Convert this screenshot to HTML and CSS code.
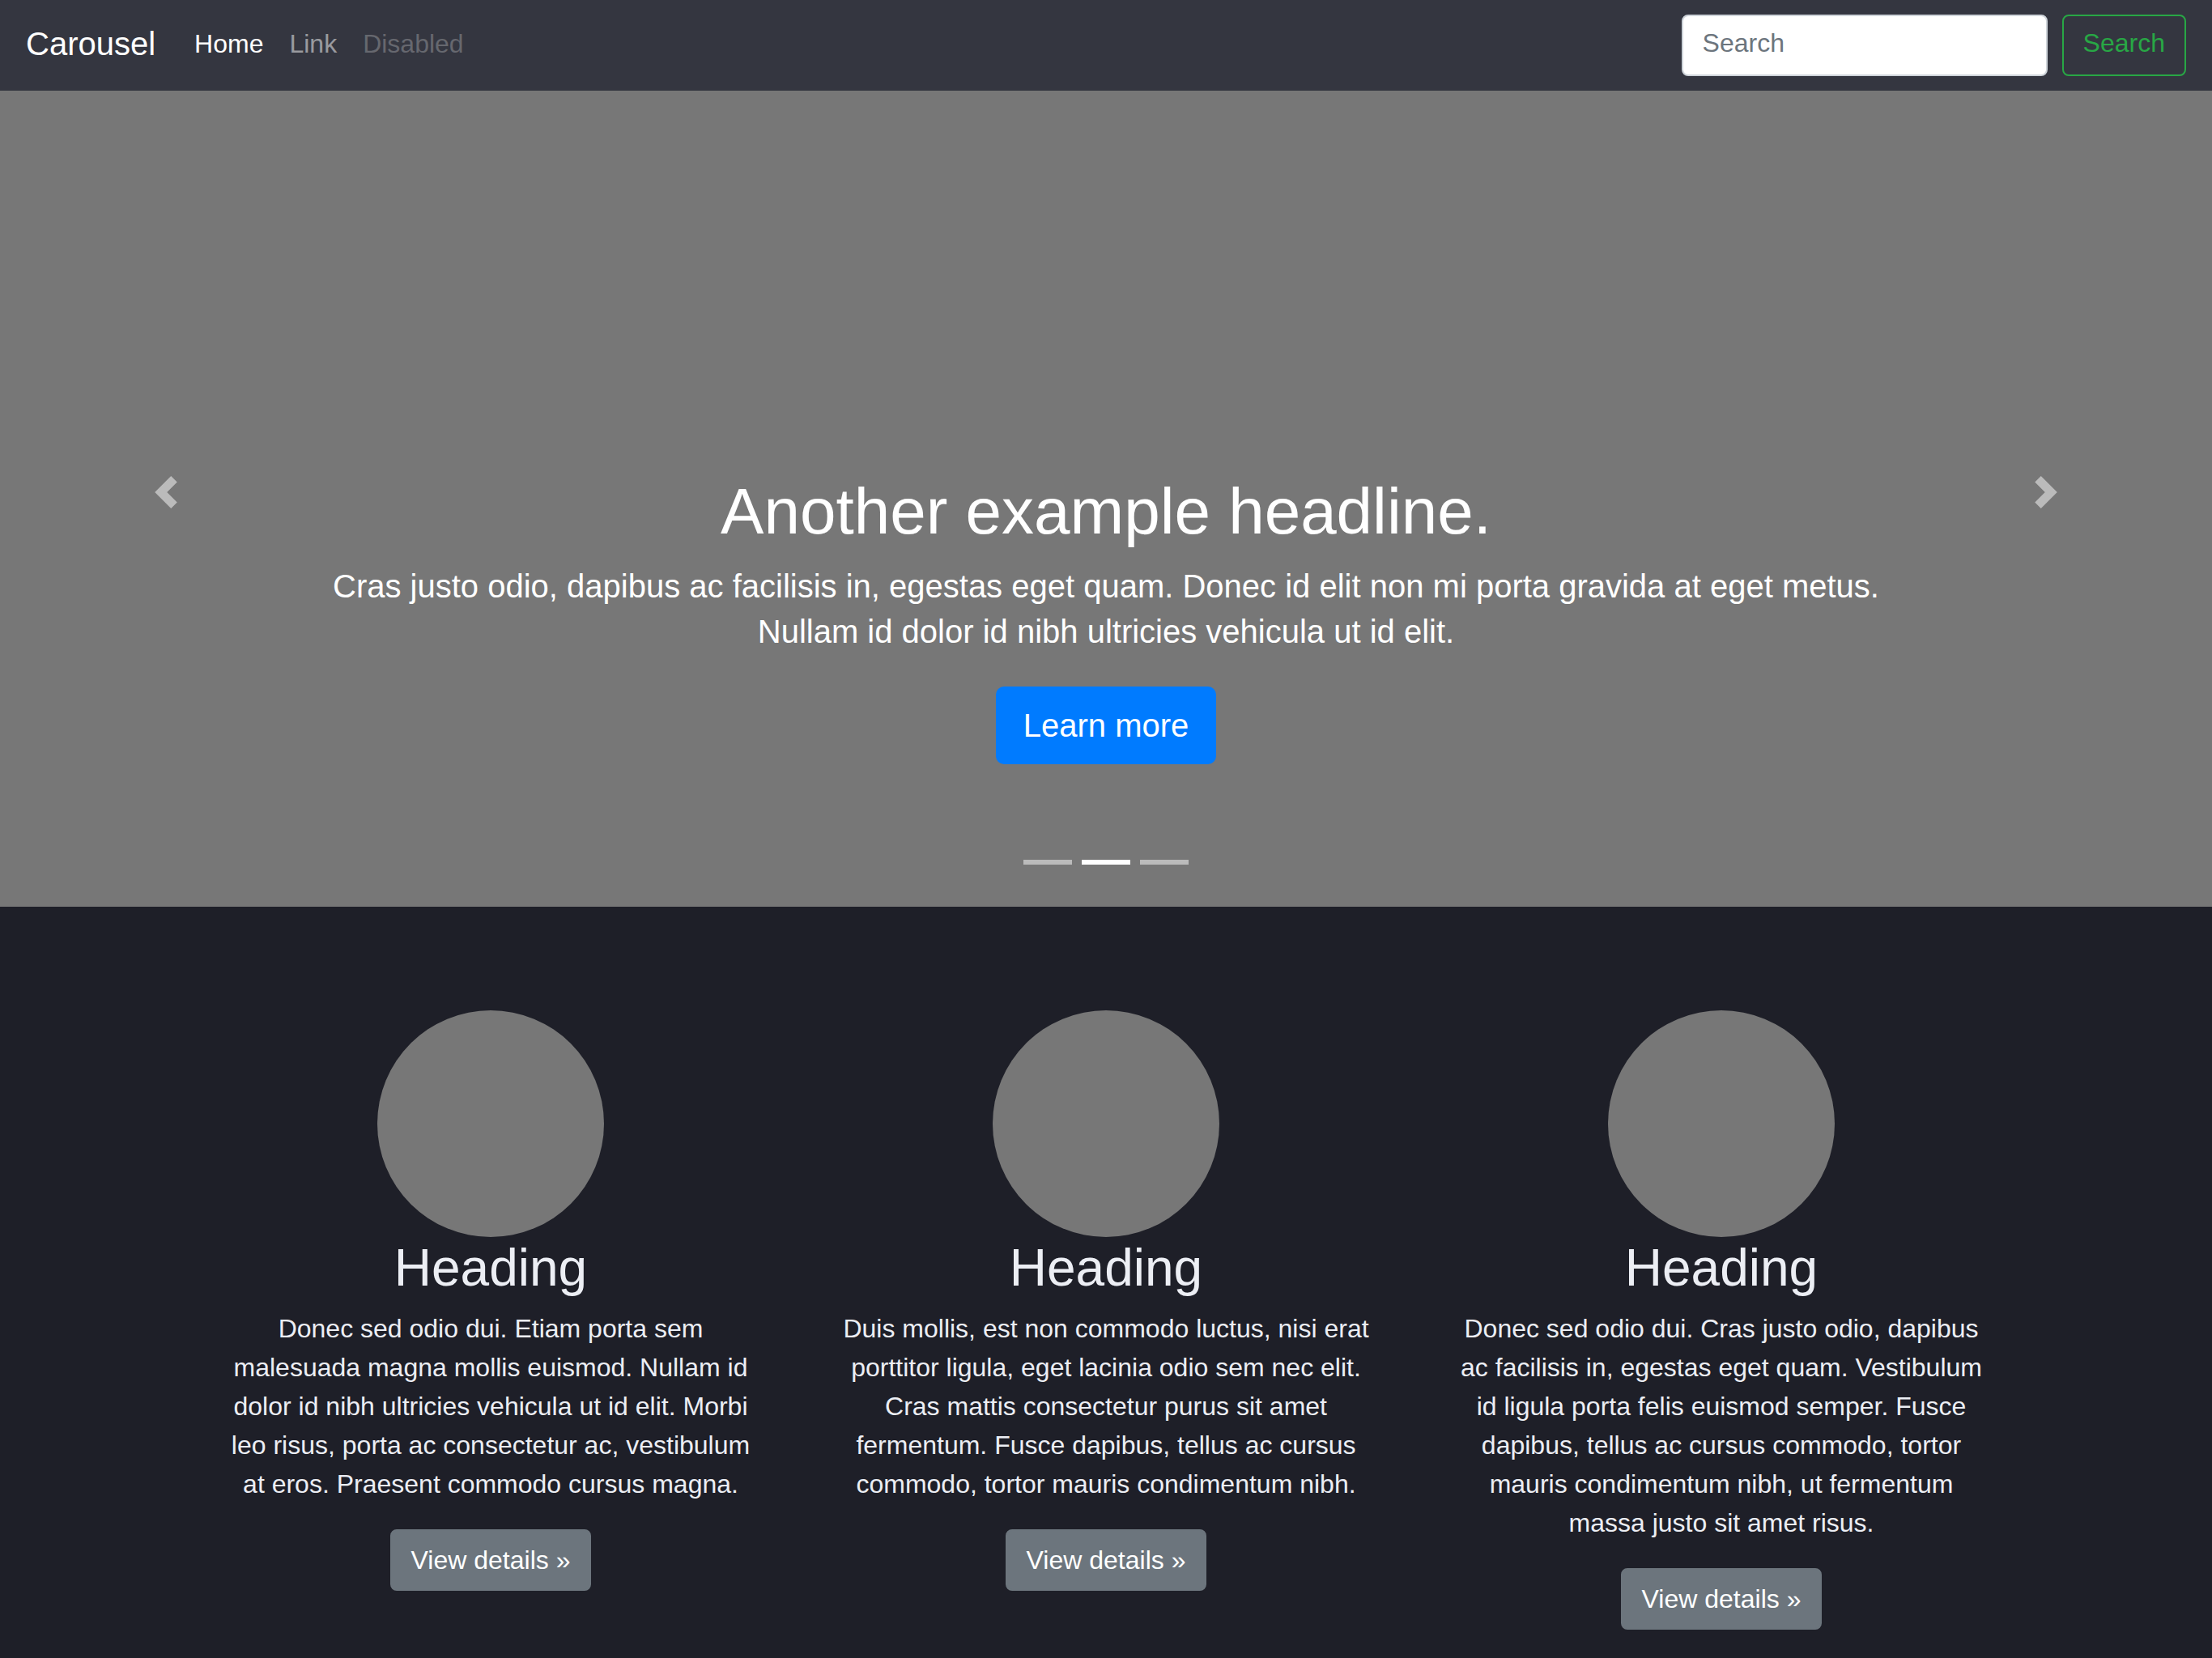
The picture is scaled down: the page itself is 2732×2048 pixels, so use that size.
FILE: index.html
```html
<!DOCTYPE html>
<html lang="en">
<head>
<meta charset="utf-8">
<title>Carousel Template</title>
<link rel="stylesheet" href="styles.css">
</head>
<body>
<header class="navbar">
  <a class="brand" href="#">Carousel</a>
  <nav class="nav">
    <a class="nav-link active" href="#">Home</a>
    <a class="nav-link" href="#">Link</a>
    <a class="nav-link disabled" href="#">Disabled</a>
  </nav>
  <form class="search">
    <input class="search-input" type="text" placeholder="Search" aria-label="Search">
    <button class="btn-outline" type="button">Search</button>
  </form>
</header>
<main>
  <section class="carousel">
    <ol class="indicators">
      <li></li>
      <li class="active"></li>
      <li></li>
    </ol>
    <div class="caption">
      <h1 class="caption-title">Another example headline.</h1>
      <p class="caption-text">Cras justo odio, dapibus ac facilisis in, egestas eget quam. Donec id elit non mi porta gravida at eget metus. Nullam id dolor id nibh ultricies vehicula ut id elit.</p>
      <p class="caption-text"><a class="btn-primary" href="#">Learn more</a></p>
    </div>
    <a class="control prev" href="#" aria-label="Previous">
      <svg class="control-icon" viewBox="0 0 8 8" width="40" height="40"><path fill="#fff" d="M5.25 0l-4 4 4 4 1.5-1.5L4.25 4l2.5-2.5L5.25 0z"/></svg>
    </a>
    <a class="control next" href="#" aria-label="Next">
      <svg class="control-icon" viewBox="0 0 8 8" width="40" height="40"><path fill="#fff" d="M2.75 0l-1.5 1.5L3.75 4l-2.5 2.5L2.75 8l4-4-4-4z"/></svg>
    </a>
  </section>

  <section class="marketing">
    <div class="col">
      <svg class="placeholder" width="280" height="280" viewBox="0 0 280 280"><circle cx="140" cy="140" r="140" fill="#777"/></svg>
      <h2 class="col-title">Heading</h2>
      <p class="col-text">Donec sed odio dui. Etiam porta sem malesuada magna mollis euismod. Nullam id dolor id nibh ultricies vehicula ut id elit. Morbi leo risus, porta ac consectetur ac, vestibulum at eros. Praesent commodo cursus magna.</p>
      <p class="col-action"><a class="btn-secondary" href="#">View details &raquo;</a></p>
    </div>
    <div class="col">
      <svg class="placeholder" width="280" height="280" viewBox="0 0 280 280"><circle cx="140" cy="140" r="140" fill="#777"/></svg>
      <h2 class="col-title">Heading</h2>
      <p class="col-text">Duis mollis, est non commodo luctus, nisi erat porttitor ligula, eget lacinia odio sem nec elit. Cras mattis consectetur purus sit amet fermentum. Fusce dapibus, tellus ac cursus commodo, tortor mauris condimentum nibh.</p>
      <p class="col-action"><a class="btn-secondary" href="#">View details &raquo;</a></p>
    </div>
    <div class="col">
      <svg class="placeholder" width="280" height="280" viewBox="0 0 280 280"><circle cx="140" cy="140" r="140" fill="#777"/></svg>
      <h2 class="col-title">Heading</h2>
      <p class="col-text">Donec sed odio dui. Cras justo odio, dapibus ac facilisis in, egestas eget quam. Vestibulum id ligula porta felis euismod semper. Fusce dapibus, tellus ac cursus commodo, tortor mauris condimentum nibh, ut fermentum massa justo sit amet risus.</p>
      <p class="col-action"><a class="btn-secondary" href="#">View details &raquo;</a></p>
    </div>
  </section>
</main>
</body>
</html>
```

FILE: styles.css
```css
html {
  background: #1e1f28;
}

body {
  margin: 0;
  background: #1e1f28;
  color: #eceef4;
  font-family: "Liberation Sans", Arial, sans-serif;
  font-size: 32px;
  line-height: 1.5;
}

a {
  text-decoration: none;
}

/* ---------- navbar ---------- */
.navbar {
  display: flex;
  align-items: center;
  height: 112px;
  box-sizing: border-box;
  padding: 14px 32px 18px;
  background: #343640;
}

.brand {
  font-size: 40px;
  line-height: 60px;
  padding: 10px 0;
  margin-right: 32px;
  color: #fff;
}

.nav {
  display: flex;
  flex: 1;
}

.nav-link {
  display: block;
  padding: 16px;
  line-height: 48px;
  color: rgba(255, 255, 255, 0.5);
}

.nav-link.active {
  color: #fff;
}

.nav-link.disabled {
  color: rgba(255, 255, 255, 0.25);
}

.search {
  display: flex;
  align-items: center;
  margin: 2px 0 -2px;
}

.search-input {
  box-sizing: border-box;
  width: 452px;
  height: 76px;
  margin-right: 18px;
  padding: 9px 24px 15px;
  border: 2px solid #ced4da;
  border-radius: 8px;
  background: #fff;
  font-family: inherit;
  font-size: 32px;
  line-height: 48px;
  color: #495057;
}

.search-input::placeholder {
  color: #6c757d;
}

.btn-outline {
  box-sizing: border-box;
  height: 76px;
  padding: 9px 24px 15px;
  border: 2px solid #28a745;
  border-radius: 8px;
  background: transparent;
  color: #28a745;
  font-family: inherit;
  font-size: 32px;
  line-height: 48px;
}

/* ---------- carousel ---------- */
.carousel {
  position: relative;
  height: 1008px;
  background: #777;
  display: flex;
  flex-direction: column;
  justify-content: flex-end;
  padding: 0 15% 96px;
  box-sizing: border-box;
  margin-bottom: 128px;
}

.caption {
  position: relative;
  z-index: 10;
  padding: 40px 0;
  text-align: center;
  color: #fff;
}

.caption-title {
  margin: 0 0 16px;
  font-size: 80px;
  font-weight: 500;
  line-height: 1.2;
}

.caption-text {
  margin: 0 0 40px;
  font-size: 40px;
  line-height: 1.4;
}

.btn-primary {
  display: inline-block;
  vertical-align: top;
  padding: 16px 32px;
  border: 2px solid #007bff;
  border-radius: 10px;
  background: #007bff;
  color: #fff;
  font-size: 40px;
  line-height: 60px;
}

.indicators {
  position: absolute;
  left: 0;
  right: 0;
  bottom: 0;
  z-index: 15;
  display: flex;
  justify-content: center;
  margin: 0 0 32px;
  padding: 0;
  list-style: none;
}

.indicators li {
  box-sizing: content-box;
  width: 60px;
  height: 6px;
  margin: 0 6px;
  border-top: 20px solid transparent;
  border-bottom: 20px solid transparent;
  background: #fff;
  background-clip: padding-box;
  opacity: 0.5;
}

.indicators li.active {
  opacity: 1;
}

.control {
  position: absolute;
  top: -16px;
  bottom: 0;
  z-index: 1;
  width: 15%;
  display: flex;
  align-items: center;
  justify-content: center;
  opacity: 0.5;
}

.control.prev {
  left: 0;
}

.control.next {
  right: 0;
}

.control-icon {
  display: block;
  width: 40px;
  height: 40px;
}

/* ---------- marketing ---------- */
.marketing {
  display: grid;
  grid-template-columns: repeat(3, 760px);
  width: 2280px;
  margin: 0 auto;
  align-items: start;
}

.col {
  padding: 0 30px;
  margin-bottom: 48px;
  text-align: center;
}

.placeholder {
  display: block;
  margin: 0 auto;
}

.col-title {
  margin: 0 0 12px;
  font-size: 64px;
  font-weight: 400;
  line-height: 1.2;
}

.col-text {
  margin: 0 24px 32px;
}

.col-action {
  margin: 0 0 32px;
}

.btn-secondary {
  display: inline-block;
  padding: 12px 24px;
  border: 2px solid #6c757d;
  border-radius: 8px;
  background: #6c757d;
  color: #fff;
  line-height: 48px;
}
```
